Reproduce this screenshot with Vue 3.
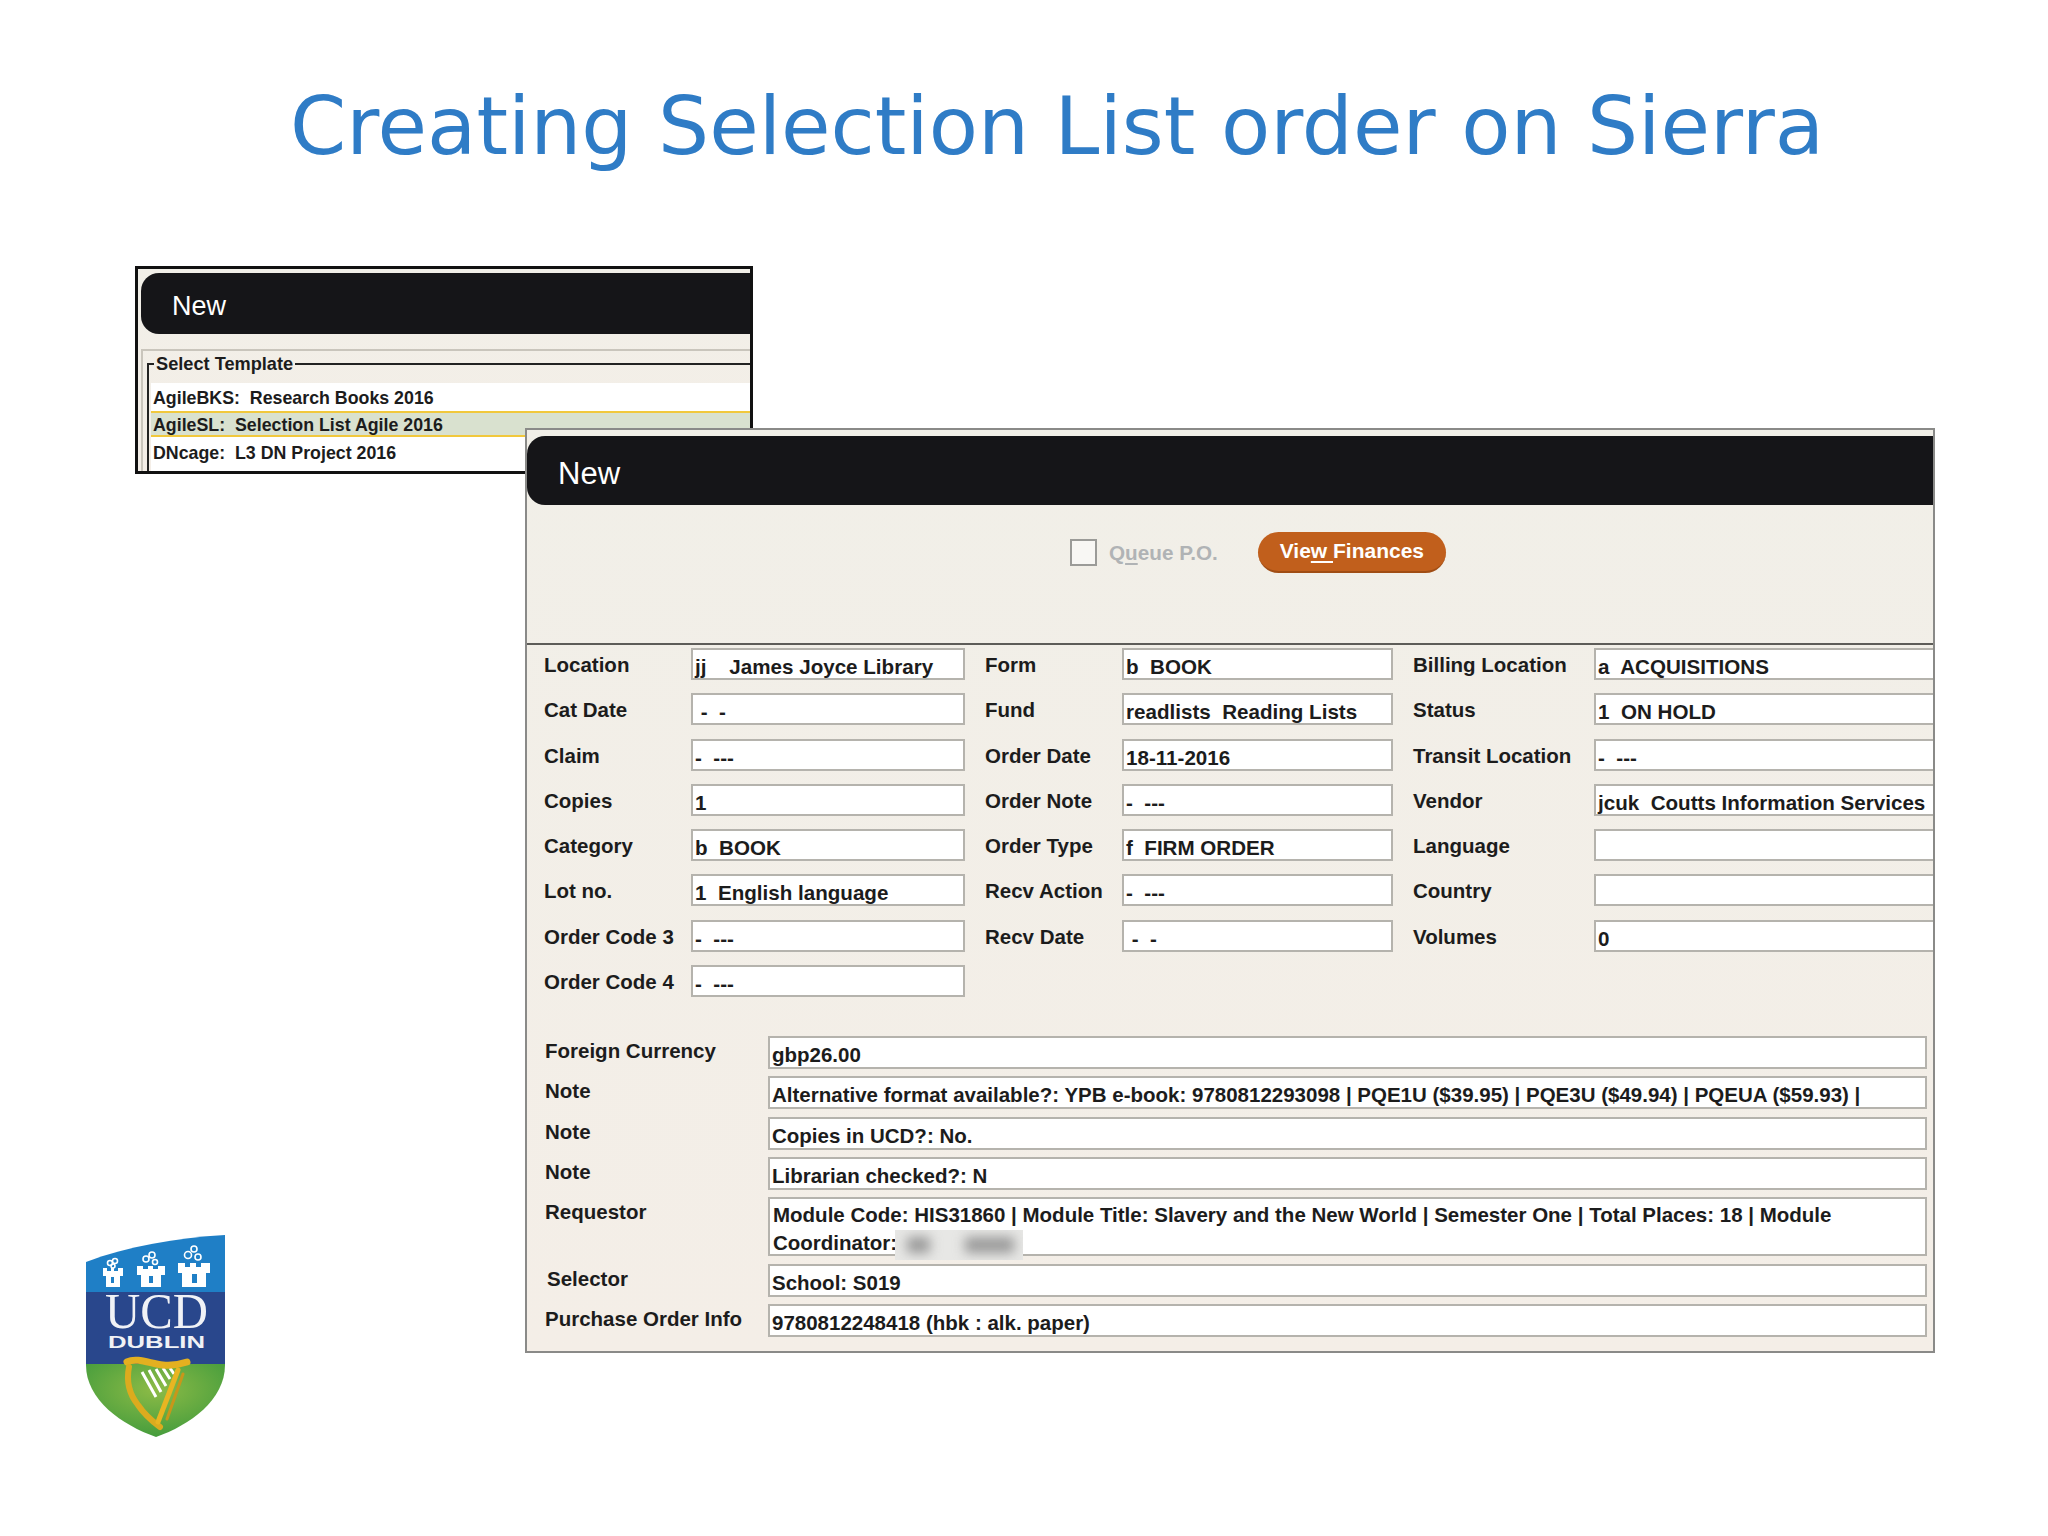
<template>
  <div class="slide">
    <h1 class="title">Creating Selection List order on Sierra</h1>

    <!-- back window: template picker -->
    <div class="win pick">
      <div class="bar small">New</div>
      <div class="pick-body">
        <fieldset class="tpl">
          <legend>Select Template</legend>
          <div class="tpl-list">
            <div
              v-for="t in templates"
              :key="t.code"
              class="tpl-row"
              :class="{ sel: t.sel }"
            >{{ t.text }}</div>
          </div>
        </fieldset>
      </div>
    </div>

    <!-- front window: the order form -->
    <div class="win order">
      <div class="bar">New</div>
      <div class="tools">
        <span class="check"></span>
        <span class="queue">Q<u>u</u>eue P.O.</span>
        <button class="finances">Vie<u>w </u>Finances</button>
      </div>

      <div class="fields">
        <template v-for="f in fields" :key="f.label">
          <div class="lab" :class="f.cls">{{ f.label }}</div>
          <div class="val" :class="f.cls">{{ f.value }}</div>
        </template>
      </div>

      <div class="long">
        <template v-for="n in longFields" :key="n.id">
          <div class="lab">{{ n.label }}</div>
          <div class="val">{{ n.value }}</div>
        </template>
        <div class="lab">Requestor</div>
        <div class="val tall">
          Module Code: HIS31860 | Module Title: Slavery and the New World | Semester One | Total Places: 18 | Module<br />Coordinator:
          <span class="redact"><i></i><i></i></span>
        </div>
        <div class="lab nudge">Selector</div>
        <div class="val nudge">School: S019</div>
        <div class="lab">Purchase Order Info</div>
        <div class="val">9780812248418 (hbk : alk. paper)</div>
      </div>
    </div>

    <svg class="logo" viewBox="0 0 139 202" width="139" height="202">
      <defs>
        <clipPath id="shield">
          <path d="M0 27C42 11 90 3 139 0V130C139 165 104 190 70 202C36 190 0 165 0 130Z" />
        </clipPath>
        <radialGradient id="grass" cx="50%" cy="35%" r="70%">
          <stop offset="0" stop-color="#8dbb46" />
          <stop offset="1" stop-color="#3f9a3c" />
        </radialGradient>
      </defs>
      <g clip-path="url(#shield)">
        <rect width="139" height="58" fill="#1f7fc6" />
        <rect y="57" width="139" height="73" fill="#29478c" />
        <rect y="129" width="139" height="73" fill="url(#grass)" />
      </g>
      <g fill="#fff">
        <path d="M17 33h4v3h4v-3h3v3h4v-3h5v8h-3v11H20V41h-3z" />
        <path d="M51 31h6v3h5v-3h5v3h5v-3h7v9h-4v12H55V40h-4z" />
        <path d="M92 28h7v4h5v-4h6v4h5v-4h9v10h-4v14H96V38h-4z" />
      </g>
      <g fill="#1f7fc6">
        <rect x="25" y="42" width="3" height="6" />
        <rect x="63" y="41" width="4" height="7" />
        <rect x="106" y="39" width="5" height="9" />
      </g>
      <g fill="none" stroke="#fff" stroke-width="1.6">
        <circle cx="24" cy="28" r="2.5" /><circle cx="29" cy="26" r="2.5" /><circle cx="27" cy="31" r="2" />
        <circle cx="60" cy="24" r="3" /><circle cx="66" cy="20" r="3" /><circle cx="69" cy="27" r="2.5" />
        <circle cx="102" cy="20" r="3.5" /><circle cx="108" cy="14" r="3" /><circle cx="112" cy="22" r="3" />
      </g>
      <text class="logo-ucd" x="19" y="93" textLength="103" lengthAdjust="spacingAndGlyphs">UCD</text>
      <text class="logo-dublin" x="22" y="113" textLength="97" lengthAdjust="spacingAndGlyphs">DUBLIN</text>
      <g stroke="#fff" stroke-width="3">
        <path d="M56 137l14 25M63 135l12 22M70 134l10 17M77 133l7 11M84 133l4 6" />
      </g>
      <g fill="none" stroke-linecap="round">
        <path d="M41 127c10-5 24 2 36 3 10 1 18-1 24-3" stroke="#e4b020" stroke-width="7" />
        <path d="M43 132c-3 15 1 28 9 38 6 9 14 16 22 22" stroke="#dcab1e" stroke-width="6" />
        <path d="M92 135L72 187" stroke="#e8b522" stroke-width="5" />
        <path d="M97 139L81 184" stroke="#c9961a" stroke-width="3" />
      </g>
    </svg>
  </div>
</template>

<script setup>
const templates = [
  { code: 'AgileBKS', text: 'AgileBKS:  Research Books 2016' },
  { code: 'AgileSL', text: 'AgileSL:  Selection List Agile 2016', sel: true },
  { code: 'DNcage', text: 'DNcage:  L3 DN Project 2016' }
]

const fields = [
  { label: 'Location', value: 'jj    James Joyce Library' },
  { label: 'Form', value: 'b  BOOK', cls: 'c2' },
  { label: 'Billing Location', value: 'a  ACQUISITIONS', cls: 'c3' },
  { label: 'Cat Date', value: ' -  -' },
  { label: 'Fund', value: 'readlists  Reading Lists', cls: 'c2' },
  { label: 'Status', value: '1  ON HOLD', cls: 'c3' },
  { label: 'Claim', value: '-  ---' },
  { label: 'Order Date', value: '18-11-2016', cls: 'c2' },
  { label: 'Transit Location', value: '-  ---', cls: 'c3' },
  { label: 'Copies', value: '1' },
  { label: 'Order Note', value: '-  ---', cls: 'c2' },
  { label: 'Vendor', value: 'jcuk  Coutts Information Services', cls: 'c3' },
  { label: 'Category', value: 'b  BOOK' },
  { label: 'Order Type', value: 'f  FIRM ORDER', cls: 'c2' },
  { label: 'Language', value: '', cls: 'c3' },
  { label: 'Lot no.', value: '1  English language' },
  { label: 'Recv Action', value: '-  ---', cls: 'c2' },
  { label: 'Country', value: '', cls: 'c3' },
  { label: 'Order Code 3', value: '-  ---' },
  { label: 'Recv Date', value: ' -  -', cls: 'c2' },
  { label: 'Volumes', value: '0', cls: 'c3' },
  { label: 'Order Code 4', value: '-  ---' }
]

const longFields = [
  { id: 1, label: 'Foreign Currency', value: 'gbp26.00' },
  { id: 2, label: 'Note', value: 'Alternative format available?: YPB e-book: 9780812293098 | PQE1U ($39.95) | PQE3U ($49.94) | PQEUA ($59.93) |' },
  { id: 3, label: 'Note', value: 'Copies in UCD?: No.' },
  { id: 4, label: 'Note', value: 'Librarian checked?: N' }
]
</script>

<style scoped>
.slide {
  position: relative;
  width: 2048px;
  height: 1536px;
  overflow: hidden;
  background: #fff;
  font-family: "Liberation Sans", Arial, sans-serif;
  color: #1c1c1c;
}
.title {
  margin: 0;
  padding: 76px 0 0 290px;
  font-family: "DejaVu Sans", Verdana, sans-serif;
  font-size: 80.5px;
  line-height: 100px;
  font-weight: 400;
  color: #2f7cc6;
  white-space: nowrap;
}
.win {
  position: absolute;
  box-sizing: border-box;
  background: linear-gradient(#f1efe8, #f4eee7);
}
.pick {
  left: 135px;
  top: 266px;
  width: 618px;
  height: 208px;
  border: 3px solid #111;
  padding: 4px 0 0 3px;
  overflow: hidden;
}
.order {
  left: 525px;
  top: 428px;
  width: 1410px;
  height: 925px;
  border: 2px solid #8a8a88;
  padding-top: 6px;
}
.bar {
  box-sizing: border-box;
  height: 69px;
  line-height: 69px;
  padding: 3px 0 0 31px;
  border-radius: 18px 0 0 18px;
  background: #151518;
  color: #fff;
  font-size: 31px;
}
.bar.small {
  height: 61px;
  line-height: 61px;
  padding: 3px 0 0 31px;
  font-size: 27px;
}

.pick-body {
  margin-top: 15px;
  border-top: 2px solid #c9c5bc;
  border-left: 2px solid #c9c5bc;
  padding: 2px 0 0 4px;
}
.tpl {
  margin: 0;
  padding: 8px 0 0 2px;
  border: 0;
  border-top: 2px solid #222;
  border-left: 2px solid #222;
  min-width: 0;
  height: 130px;
}
.tpl legend {
  margin-left: 3px;
  padding: 0 2px;
  font-size: 18.2px;
  font-weight: 700;
  line-height: 22px;
}
.tpl-list {
  background: #fff;
  height: 100px;
  font-size: 17.8px;
  font-weight: 700;
  white-space: pre;
}
.tpl-row {
  height: 28px;
  line-height: 31px;
  padding-left: 2px;
}
.tpl-row.sel {
  box-sizing: border-box;
  height: 26px;
  line-height: 25px;
  background: #d9e1cf;
  border-top: 2px solid #f1c83c;
  border-bottom: 2px solid #f1c83c;
}
.tpl-row:last-child {
  height: 32px;
  line-height: 33px;
}

.tools {
  display: flex;
  align-items: center;
  height: 140px;
  padding: 0 0 43px 543px;
  box-sizing: border-box;
  border-bottom: 2px solid #5d5c58;
}
.check {
  box-sizing: border-box;
  width: 27px;
  height: 27px;
  border: 2px solid #9b9b98;
  background: #f8f7f4;
}
.queue {
  margin-left: 12px;
  font-size: 20.7px;
  font-weight: 700;
  color: #b0b3b5;
}
.queue u, .finances u {
  text-underline-offset: 3px;
}
.finances {
  margin-left: 40px;
  width: 188px;
  height: 41px;
  padding: 0 0 2px;
  border: 0;
  border-bottom: 2px solid #a04d14;
  border-radius: 21px;
  background: #c15f1c;
  color: #fff;
  font-family: inherit;
  font-size: 21px;
  font-weight: 700;
  white-space: pre;
}

.lab {
  font-size: 20.5px;
  font-weight: 700;
  line-height: 33px;
  white-space: nowrap;
}
.val {
  box-sizing: border-box;
  border: 2px solid #b5b3ad;
  background: #fff;
  padding: 3px 0 0 2px;
  font-size: 20.6px;
  font-weight: 700;
  line-height: 28px;
  white-space: pre;
  overflow: hidden;
}
.fields {
  display: grid;
  grid-template-columns: 147px 274px 157px 271px 201px 1fr;
  grid-auto-rows: 32px;
  row-gap: 13.3px;
  padding: 3px 0 0 17px;
}
.fields .lab.c2,
.fields .lab.c3 {
  padding-left: 20px;
}
.fields .val.c3 {
  border-right: 0;
}

.long {
  display: grid;
  grid-template-columns: 223px 1159px;
  row-gap: 7.3px;
  padding: 39px 0 0 18px;
}
.long .val {
  height: 33px;
  font-size: 20.5px;
}
.long .lab {
  font-size: 20.5px;
  line-height: 30px;
}
.long .nudge {
  padding-left: 2px;
}
.long .val.tall {
  position: relative;
  height: 59px;
  line-height: 27.5px;
  overflow: visible;
  white-space: normal;
  padding-left: 3px;
  padding-top: 2px;
}
.redact {
  position: absolute;
  left: 125px;
  top: 31px;
  width: 128px;
  height: 30px;
  background: #e7e7e5;
  overflow: hidden;
}
.redact i {
  position: absolute;
  top: 7px;
  height: 16px;
  background: #999;
  filter: blur(6px);
}
.redact i:first-child {
  left: 12px;
  width: 23px;
}
.redact i:last-child {
  left: 70px;
  width: 49px;
}

.logo {
  position: absolute;
  left: 86px;
  top: 1235px;
}
.logo-ucd {
  font-family: "Liberation Serif", serif;
  font-size: 50px;
  fill: #f0f2f6;
}
.logo-dublin {
  font-family: "Liberation Sans", sans-serif;
  font-size: 17px;
  font-weight: 700;
  fill: #f0f2f6;
}
</style>

<style>
body {
  background: #fff;
}
</style>
